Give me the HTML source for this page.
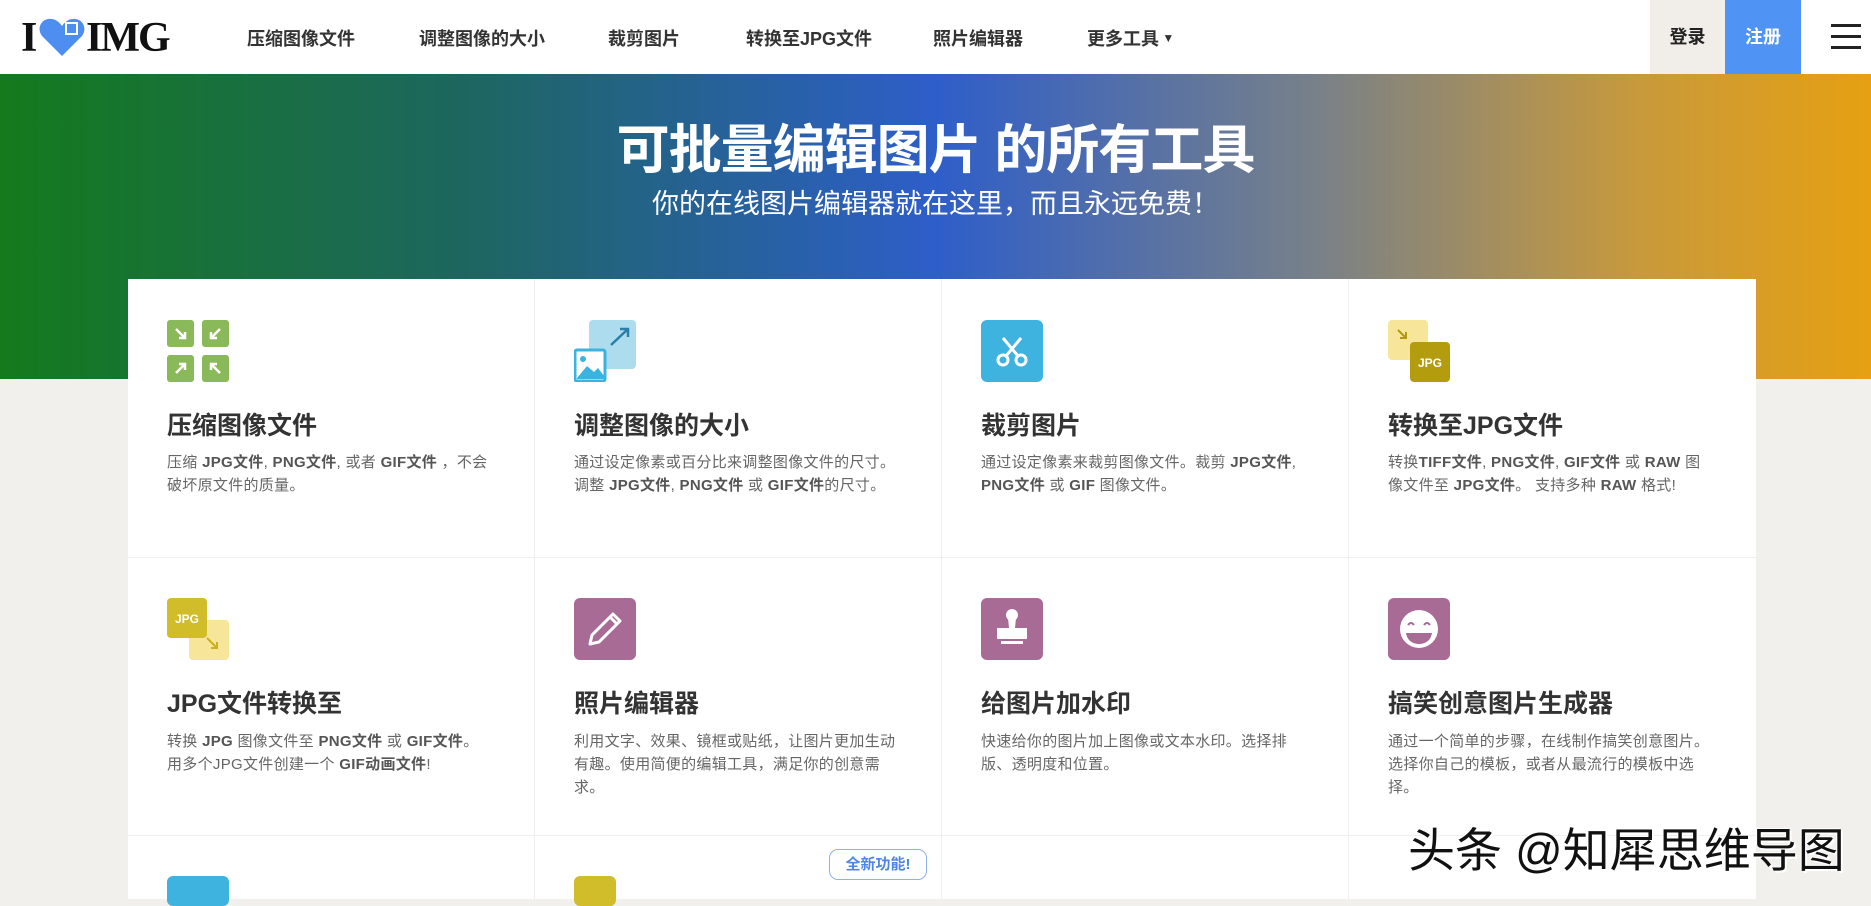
<!DOCTYPE html>
<html><head><meta charset="utf-8">
<style>
*{margin:0;padding:0;box-sizing:border-box}
body{width:1871px;height:892px;overflow:hidden;background:#f2f0ec;font-family:"Liberation Sans","Noto Sans CJK SC",sans-serif;position:relative}
.hdr{position:absolute;left:0;top:0;width:1871px;height:74px;background:#fff}
.nav{position:absolute;top:25px;font-size:18px;font-weight:bold;color:#333}
.hero{position:absolute;left:0;top:74px;width:1871px;height:305px;background:linear-gradient(90deg,#147a1c 0%,#1d6660 25%,#2e5ec9 50%,#77808a 70%,#c99a3a 88%,#e6a012 100%)}
.h1{position:absolute;top:108px;width:100%;text-align:center;color:#fff;font-size:53px;font-weight:bold;letter-spacing:-1px}
.h2{position:absolute;top:182px;width:100%;text-align:center;color:#fff;font-size:27px}
.panel{position:absolute;left:128px;top:279px;width:1628px;height:620px;background:#fff}
.vl{position:absolute;top:0;width:1px;height:620px;background:#f0efed}
.hl{position:absolute;left:0;width:1628px;height:1px;background:#f0efed}
.t{position:absolute;font-size:25px;font-weight:bold;color:#333}
.d{position:absolute;font-size:15px;line-height:23px;color:#666;width:322px;letter-spacing:0.3px}
.d b{color:#555}
.ic{position:absolute;width:62px;height:62px}
</style></head><body>
<div class="hdr">
 <div style="position:absolute;left:21px;top:14px;font-family:'Liberation Serif',serif;font-weight:bold;font-size:42px;color:#111;letter-spacing:-1px">I</div>
 <svg style="position:absolute;left:38px;top:16px" width="48" height="42" viewBox="0 0 48 42"><path d="M24 40 L4 20 C-2 12 4 2 13 3 C18 3 22 7 24 10 C26 7 30 3 35 3 C44 2 50 12 44 20 Z" fill="#4d8ef0"/><path d="M27 6 L40 6 L40 19 L27 19 Z" fill="#fff"/><path d="M29 8 L38 8 L38 17 L29 17Z" fill="#4d8ef0"/></svg>
 <div style="position:absolute;left:86px;top:14px;font-family:'Liberation Serif',serif;font-weight:bold;font-size:42px;color:#111;letter-spacing:-2px">IMG</div>
 <div class="nav" style="left:247px">压缩图像文件</div>
 <div class="nav" style="left:419px">调整图像的大小</div>
 <div class="nav" style="left:608px">裁剪图片</div>
 <div class="nav" style="left:746px">转换至JPG文件</div>
 <div class="nav" style="left:933px">照片编辑器</div>
 <div class="nav" style="left:1087px">更多工具<span style="font-size:12px;position:relative;top:-3px"> ▼</span></div>
 <div style="position:absolute;left:1650px;top:0;width:75px;height:74px;background:#f1eeea;color:#222;font-weight:bold;font-size:18px;text-align:center;line-height:74px">登录</div>
 <div style="position:absolute;left:1725px;top:0;width:76px;height:74px;background:#4f93f5;color:#fff;font-weight:bold;font-size:18px;text-align:center;line-height:74px">注册</div>
 <div style="position:absolute;left:1831px;top:24px;width:30px;height:3px;background:#222"></div>
 <div style="position:absolute;left:1831px;top:35px;width:30px;height:3px;background:#222"></div>
 <div style="position:absolute;left:1831px;top:46px;width:30px;height:3px;background:#222"></div>
</div>
<div class="hero"></div>
<div class="h1">可批量编辑图片 的所有工具</div>
<div class="h2">你的在线图片编辑器就在这里，而且永远免费！</div>
<div class="panel">
 <div class="vl" style="left:406px"></div><div class="vl" style="left:813px"></div><div class="vl" style="left:1220px"></div>
 <div class="hl" style="top:278px"></div><div class="hl" style="top:556px"></div>
 <div style="position:absolute;left:701px;top:570px;width:98px;height:31px;border:1px solid #8fb0ee;border-radius:9px;color:#4f85e8;font-size:15px;font-weight:bold;text-align:center;line-height:29px">全新功能!</div>
</div>
<svg class="ic" style="left:167px;top:320px" viewBox="0 0 62 62"><g fill="#8ab95a"><rect x="0" y="0" width="27" height="27" rx="3"/><rect x="35" y="0" width="27" height="27" rx="3"/><rect x="0" y="35" width="27" height="27" rx="3"/><rect x="35" y="35" width="27" height="27" rx="3"/></g><g stroke="#fff" stroke-width="2.5" fill="none"><path d="M9 9 L18 18 M12 18 H18 V12"/><path d="M53 9 L44 18 M50 18 H44 V12"/><path d="M9 53 L18 44 M12 44 H18 V50"/><path d="M53 53 L44 44 M50 44 H44 V50"/></g></svg>
<svg class="ic" style="left:574px;top:320px" viewBox="0 0 62 62"><rect x="15" y="0" width="47" height="49" rx="4" fill="#aedcef"/><path d="M37 25 L54 9 M46 9 H54 V17" stroke="#2a7fa8" stroke-width="2.5" fill="none"/><rect x="1" y="30" width="30" height="31" rx="2" fill="#fff" stroke="#3bb3e0" stroke-width="3"/><circle cx="9" cy="39" r="3" fill="#3bb3e0"/><path d="M3 58 L13 46 L20 52 L24 48 L30 56 L30 59 L3 59Z" fill="#3bb3e0"/></svg>
<svg class="ic" style="left:981px;top:320px" viewBox="0 0 62 62"><rect width="62" height="62" rx="6" fill="#3fb3e0"/><g stroke="#fff" stroke-width="3" fill="none"><circle cx="22" cy="40" r="5"/><circle cx="40" cy="40" r="5"/><path d="M25 36 L40 18 M37 36 L22 18"/></g></svg>
<svg class="ic" style="left:1388px;top:320px" viewBox="0 0 62 62"><rect x="0" y="0" width="40" height="40" rx="4" fill="#f7e69a"/><path d="M10 10 L18 18 M12 18 H18 V12" stroke="#b19a10" stroke-width="2" fill="none"/><rect x="22" y="22" width="40" height="40" rx="4" fill="#b39d0e"/><text x="42" y="47" font-size="12" font-weight="bold" fill="#fff" text-anchor="middle" font-family="Liberation Sans">JPG</text></svg>
<div class="t" style="left:167px;top:406px">压缩图像文件</div>
<div class="d" style="left:167px;top:451px">压缩 <b>JPG文件</b>, <b>PNG文件</b>, 或者 <b>GIF文件</b> ，不会破坏原文件的质量。</div>
<div class="t" style="left:574px;top:406px">调整图像的大小</div>
<div class="d" style="left:574px;top:451px">通过设定像素或百分比来调整图像文件的尺寸。 调整 <b>JPG文件</b>, <b>PNG文件</b> 或 <b>GIF文件</b>的尺寸。</div>
<div class="t" style="left:981px;top:406px">裁剪图片</div>
<div class="d" style="left:981px;top:451px">通过设定像素来裁剪图像文件。裁剪 <b>JPG文件</b>, <b>PNG文件</b> 或 <b>GIF</b> 图像文件。</div>
<div class="t" style="left:1388px;top:406px">转换至JPG文件</div>
<div class="d" style="left:1388px;top:451px">转换<b>TIFF文件</b>, <b>PNG文件</b>, <b>GIF文件</b> 或 <b>RAW</b> 图像文件至 <b>JPG文件</b>。 支持多种 <b>RAW</b> 格式!</div>
<svg class="ic" style="left:167px;top:598px" viewBox="0 0 62 62"><rect x="22" y="22" width="40" height="40" rx="4" fill="#f7e69a"/><path d="M40 40 L50 50 M44 50 H50 V44" stroke="#c9b020" stroke-width="2" fill="none"/><rect x="0" y="0" width="40" height="40" rx="4" fill="#d1bc2a"/><text x="20" y="25" font-size="12" font-weight="bold" fill="#fff" text-anchor="middle" font-family="Liberation Sans">JPG</text></svg>
<svg class="ic" style="left:574px;top:598px" viewBox="0 0 62 62"><rect width="62" height="62" rx="6" fill="#a86b96"/><path d="M16 46 L18 37 L39 16 L46 23 L25 44 Z M36 19 L43 26" stroke="#fff" stroke-width="3" fill="none" stroke-linejoin="round"/></svg>
<svg class="ic" style="left:981px;top:598px" viewBox="0 0 62 62"><rect width="62" height="62" rx="6" fill="#a86b96"/><circle cx="31" cy="17" r="6" fill="#fff"/><path d="M27 20 L35 20 L34 30 L28 30Z" fill="#fff"/><rect x="16" y="30" width="30" height="11" fill="#fff"/><rect x="20" y="43" width="22" height="3" fill="#fff"/></svg>
<svg class="ic" style="left:1388px;top:598px" viewBox="0 0 62 62"><rect width="62" height="62" rx="6" fill="#a86b96"/><circle cx="31" cy="31" r="19" fill="#fff"/><path d="M18 35 H44 C43 42 38 46 31 46 C24 46 19 42 18 35Z" fill="#a86b96"/><path d="M20 27 Q23 23 26 27 M36 27 Q39 23 42 27" stroke="#a86b96" stroke-width="2" fill="none"/></svg>
<div class="t" style="left:167px;top:684px">JPG文件转换至</div>
<div class="d" style="left:167px;top:730px">转换 <b>JPG</b> 图像文件至 <b>PNG文件</b> 或 <b>GIF文件</b>。用多个JPG文件创建一个 <b>GIF动画文件</b>!</div>
<div class="t" style="left:574px;top:684px">照片编辑器</div>
<div class="d" style="left:574px;top:730px">利用文字、效果、镜框或贴纸，让图片更加生动有趣。使用简便的编辑工具，满足你的创意需求。</div>
<div class="t" style="left:981px;top:684px">给图片加水印</div>
<div class="d" style="left:981px;top:730px">快速给你的图片加上图像或文本水印。选择排版、透明度和位置。</div>
<div class="t" style="left:1388px;top:684px">搞笑创意图片生成器</div>
<div class="d" style="left:1388px;top:730px">通过一个简单的步骤，在线制作搞笑创意图片。选择你自己的模板，或者从最流行的模板中选择。</div>
<div style="position:absolute;left:167px;top:876px;width:62px;height:30px;background:#3fb3e0;border-radius:6px"></div>
<div style="position:absolute;left:574px;top:876px;width:42px;height:30px;background:#d1bc2a;border-radius:6px"></div>
<div style="position:absolute;left:1408px;top:812px;font-size:47px;color:#111;font-family:'Liberation Sans','Noto Sans CJK SC',sans-serif;text-shadow:2px 2px 0 #fff,-1px -1px 0 #fff">头条 @知犀思维导图</div>
</body></html>
